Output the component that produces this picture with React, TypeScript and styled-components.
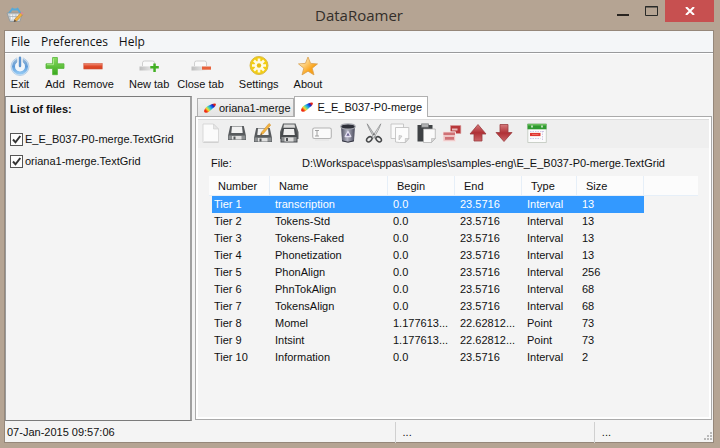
import React from "react";
import styled, { createGlobalStyle, css } from "styled-components";

const sans = `"Liberation Sans", Arial, sans-serif`;
const humanist = `"Open Sans", "Noto Sans", sans-serif`;

const GlobalStyle = createGlobalStyle`
  *, *::before, *::after { box-sizing: border-box; }
  body { margin: 0; background: #b5a493; font: 11px/16px ${sans}; color: #111; }
  button, input, table { font: inherit; color: inherit; }
`;

const Frame = styled.div`
  display: flex;
  flex-direction: column;
  min-height: 100vh;
  padding: 0 6px 5px 4px;
  background: #b5a493;
`;

const TitleBar = styled.header`
  display: grid;
  grid-template-columns: 1fr auto 1fr;
  height: 30px;
`;

const AppIcon = styled.svg`
  width: 18px;
  height: 18px;
  margin: 6px 0 0 2px;
`;

const Title = styled.h1`
  margin: 0;
  font: 400 15px/31px ${humanist};
  color: #332e2a;
`;

const WindowControls = styled.div`
  display: flex;
  justify-content: flex-end;
  align-items: flex-start;
`;

const WindowButton = styled.button<{ $danger?: boolean }>`
  display: grid;
  place-items: center;
  width: ${(p) => (p.$danger ? 49 : 28)}px;
  height: 22px;
  padding: 0;
  border: 0;
  background: ${(p) => (p.$danger ? "#c75050" : "transparent")};
`;

const Client = styled.div`
  display: flex;
  flex-direction: column;
  flex: 1;
  border: 1px solid #95877a;
  background: #f4f4f4;
`;

const MenuBar = styled.nav`
  display: flex;
  gap: 11px;
  height: 22px;
  padding-left: 6px;
  background: #f4f6f8;
  border-bottom: 1px solid #999a9c;
`;

const MenuItem = styled.button`
  padding: 0;
  border: 0;
  background: none;
  font: 12px/20px ${humanist};
`;

const MainToolbar = styled.div`
  display: flex;
  gap: 15px;
  height: 43px;
  padding: 2px 0 0 5px;
  border-top: 1px solid #fff;
`;

const ToolGroup = styled.div`
  display: flex;
  gap: 8px;
`;

const MainTool = styled.button`
  display: flex;
  flex-direction: column;
  align-items: center;
  padding: 0;
  border: 0;
  background: none;

  svg { width: 20px; height: 20px; }
`;

const Body = styled.div`
  display: flex;
  flex: 1;
  gap: 3px;
`;

const FilePanel = styled.aside`
  flex: 0 0 187px;
  padding: 4px 4px;
  border: 1px solid #7b7b7b;
  border-left-color: #999;
  border-right: 2px solid #a0a0a0;
`;

const PanelTitle = styled.h2`
  margin: 0 0 11px;
  font: 700 11px/16px ${sans};
`;

const FileRow = styled.label`
  display: flex;
  align-items: center;
  gap: 2px;
  height: 22px;
`;

const Tick = styled.span`
  display: grid;
  width: 13px;
  height: 13px;

  input, svg { grid-area: 1 / 1; margin: 0; width: 13px; height: 13px; }
  input { appearance: none; border: 1px solid #555; background: #fdfdfd; }
  svg { pointer-events: none; visibility: hidden; }
  input:checked + svg { visibility: visible; }
`;

const Notebook = styled.main`
  display: flex;
  flex-direction: column;
  flex: 1;
  min-width: 0;
  margin: 0 1px 1px 0;
`;

const Tabs = styled.div`
  display: flex;
  align-items: flex-end;
  height: 20px;
  padding-left: 2px;
`;

const Tab = styled.button<{ $active?: boolean }>`
  display: flex;
  align-items: center;
  gap: 2px;
  height: 18px;
  padding: 0 2px 0 5px;
  border: 1px solid #b0b0b0;
  border-bottom: 0;
  background: linear-gradient(#f1f1f1, #e4e4e4);

  svg { width: 14px; height: 12px; }

  ${(p) =>
    p.$active &&
    css`
      position: relative;
      gap: 4px;
      height: 21px;
      margin-bottom: -1px;
      padding: 0 5px;
      background: #fff;
    `}
`;

const Page = styled.section`
  flex: 1;
  border: 1px solid #aaa;
  box-shadow: inset 0 0 0 2px #fff;
  padding: 2px;
`;

const DocToolbar = styled.div`
  display: flex;
  gap: 7px;
  height: 29px;
  background: #efefef;
  border-top: 1px solid #dcdcdc;
`;

const DocGroup = styled.div`
  display: flex;
`;

const DocTool = styled.button`
  display: grid;
  place-items: center;
  width: 26px;
  height: 26px;
  padding: 0;
  border: 0;
  background: none;

  svg { width: 20px; height: 20px; }
`;

const FileLine = styled.dl`
  display: grid;
  grid-template-columns: 91px 1fr;
  margin: 7px 0 5px;
  padding-left: 13px;

  dd { margin: 0; white-space: nowrap; }
`;

const TierTable = styled.table`
  width: calc(100% - 22px);
  margin-left: 11px;
  table-layout: fixed;
  border-spacing: 0;
  text-align: left;
`;

const Col = styled.col<{ $w?: number }>`
  width: ${(p) => (p.$w ? `${p.$w}px` : "auto")};
`;

const HeadCell = styled.th`
  height: 20px;
  padding: 0 0 0 9px;
  font-weight: 400;
  background: #fcfcfc;
  border-right: 1px solid #e6eff8;
  border-bottom: 1px solid #e6eff8;

  &:last-child { border-right: 0; }
`;

const Cell = styled.td`
  height: 17px;
  padding: 0 3px 0 5px;
  line-height: 17px;
  overflow: hidden;
  white-space: nowrap;

  &:first-child {
    padding-left: 2px;
    border-left: 3px solid transparent;
    background-clip: padding-box;
  }
`;

const Row = styled.tr<{ $selected?: boolean }>`
  ${(p) =>
    p.$selected &&
    css`
      ${Cell}:not(:last-child) { background-color: #3399ff; color: #fff; }
    `}
`;

const StatusBar = styled.footer`
  display: grid;
  grid-template-columns: 389fr 199fr 119fr;
  height: 21px;
  padding-top: 1px;
`;

const StatusField = styled.div`
  display: flex;
  justify-content: space-between;
  padding-left: 2px;
  line-height: 21px;

  & + & { padding-left: 7px; border-left: 1px solid #d0d0d0; }
  svg { align-self: flex-end; width: 12px; height: 12px; }
`;

const BasketIcon = () => (
  <AppIcon viewBox="0 0 18 18" aria-hidden="true">
    <path d="M2.500 8 7 2M15 8 11 2M6.500 3.500h5" stroke="#57a9d8" strokeWidth="2" fill="none" />
    <path d="M1 7h15.500l-2.700 8.500H4z" fill="#ccd1d4" stroke="#8c979d" strokeWidth=".8" />
    <path d="M5 8.500l1 5M8 8.500v5M11.500 8.500l-.5 5" stroke="#f6f8f9" strokeWidth="1.300" />
    <path d="M3 10.500h11" stroke="#a9b2b8" strokeWidth=".8" />
    <path d="M8.500 13.500 14.500 7l2 1.800-6 6.400z" fill="#f2b13c" stroke="#b7792a" strokeWidth=".5" />
    <path d="m14.500 7 1-1.200 2 1.800-1 1.200z" fill="#d78a9a" />
    <path d="m8.500 13.500-.8 2.500 2.800-.8z" fill="#5d4630" />
  </AppIcon>
);

const PowerIcon = () => (
  <svg viewBox="0 0 20 20" aria-hidden="true">
    <defs>
      <linearGradient id="power" x2="0" y2="1">
        <stop stopColor="#8fb3d6" />
        <stop offset=".5" stopColor="#5f9bd8" />
        <stop offset="1" stopColor="#8fc6f2" />
      </linearGradient>
    </defs>
    <circle cx="10" cy="10.500" r="9" fill="#d3e5f6" stroke="#a9c6e2" strokeWidth=".8" />
    <circle cx="10" cy="10.500" r="6.500" fill="none" stroke="url(#power)" strokeWidth="3" />
    <circle cx="10" cy="10.500" r="4.800" fill="#f1f6fb" />
    <path d="M10 0v11" stroke="#f4f4f4" strokeWidth="5.500" />
    <path d="M10 1.800v8.200" stroke="#5b93cf" strokeWidth="2.400" strokeLinecap="round" />
  </svg>
);

const PlusIcon = () => (
  <svg viewBox="0 0 20 20" aria-hidden="true">
    <defs>
      <linearGradient id="plus" x2="0" y2="1">
        <stop stopColor="#8bdc62" />
        <stop offset="1" stopColor="#38a81c" />
      </linearGradient>
    </defs>
    <path d="M7.600 1.500h4.800v6.300H19v4.600h-6.600v6.300H7.600v-6.300H1V7.800h6.600z" fill="url(#plus)" stroke="#56b53a" strokeWidth=".8" />
    <path d="M8.500 2.500v6.200H2" stroke="#b7ef99" fill="none" strokeWidth=".8" />
  </svg>
);

const MinusIcon = () => (
  <svg viewBox="0 0 20 20" aria-hidden="true">
    <defs>
      <linearGradient id="minus" x2="0" y2="1">
        <stop stopColor="#f0907a" />
        <stop offset=".5" stopColor="#e04a2a" />
        <stop offset="1" stopColor="#d2401f" />
      </linearGradient>
    </defs>
    <rect x=".8" y="7.500" width="18.400" height="5.500" fill="url(#minus)" stroke="#d5553b" strokeWidth=".6" />
  </svg>
);

const TabShape = ({ id }: { id: string }) => (
  <>
    <defs>
      <linearGradient id={id}>
        <stop stopColor="#bdbdbd" />
        <stop offset="1" stopColor="#f7f7f7" />
      </linearGradient>
    </defs>
    <path d="M3.500 10V6.800q0-1.800 2-1.800h8q2 0 2 1.800V10" fill="#fafafa" stroke="#c4c4c4" strokeWidth=".8" />
    <path d="M.5 10.500h17v4H.5z" fill={`url(#${id})`} />
  </>
);

const NewTabIcon = () => (
  <svg viewBox="0 0 20 20" aria-hidden="true">
    <TabShape id="tabNew" />
    <path d="M14.300 7.500h2.500V10h3v2.500h-3v3.500h-2.500v-3.500h-3V10h3z" fill="#43b024" />
  </svg>
);

const CloseTabIcon = () => (
  <svg viewBox="0 0 20 20" aria-hidden="true">
    <TabShape id="tabClose" />
    <path d="M11 10.500h9v3.200h-9z" fill="#e8633c" />
  </svg>
);

const GearIcon = () => (
  <svg viewBox="0 0 20 20" aria-hidden="true">
    <defs>
      <radialGradient id="gear">
        <stop stopColor="#f4c81a" />
        <stop offset="1" stopColor="#f2cf10" />
      </radialGradient>
    </defs>
    <circle cx="10" cy="9.500" r="9" fill="url(#gear)" stroke="#d9b84a" />
    <path d="M10 2.500v14M3 9.500h14M5 4.500l10 10M15 4.500l-10 10" stroke="#fffbe4" strokeWidth="2.600" />
    <circle cx="10" cy="9.500" r="4.500" fill="#fffbe4" />
    <circle cx="10" cy="9.500" r="2.200" fill="#e9bd12" />
  </svg>
);

const StarIcon = () => (
  <svg viewBox="0 0 20 20" aria-hidden="true">
    <defs>
      <linearGradient id="star" x2="1" y2="1">
        <stop offset=".2" stopColor="#ffe9b5" />
        <stop offset=".65" stopColor="#fba51d" />
        <stop offset="1" stopColor="#f39a14" />
      </linearGradient>
    </defs>
    <path d="m10 1 2.600 6.400 6.900.5-5.300 4.300 1.800 6.700L10 15.200l-6 3.700 1.800-6.700L.5 7.900l6.900-.5z" fill="url(#star)" stroke="#d9a04b" strokeWidth=".8" />
  </svg>
);

const PlumeIcon = ({ id }: { id: string }) => (
  <svg viewBox="0 0 14 12" aria-hidden="true">
    <defs>
      <linearGradient id={id} gradientUnits="userSpaceOnUse" x1="11.500" y1="2" x2="3" y2="10">
        <stop offset=".05" stopColor="#e8200c" />
        <stop offset=".2" stopColor="#1a22c8" />
        <stop offset=".42" stopColor="#149af0" />
        <stop offset=".6" stopColor="#62dca0" />
        <stop offset=".75" stopColor="#f6d92e" />
        <stop offset=".95" stopColor="#ee2a12" />
      </linearGradient>
    </defs>
    <path d="M1 9Q2 5 6.500 3.200 11 .5 12.800 1.800 13.500 4 9.500 6.500 6 10.500 3 10.800 1 11 1 9z" fill={`url(#${id})`} />
  </svg>
);

const PageIcon = () => (
  <svg viewBox="0 0 20 20" aria-hidden="true">
    <path d="M2 1h10.500L17.500 6v13.500H2z" fill="#fbfbfb" stroke="#d2d2d2" strokeWidth=".8" />
    <path d="M12.500 1v5h5z" fill="#e6e6e6" stroke="#cfcfcf" strokeWidth=".6" />
    <path d="M3 19h14" stroke="#c9c9c9" />
  </svg>
);

const Floppy = () => (
  <>
    <path d="M3.200 3h13.600L19 13v4H1v-4z" fill="#575a5d" />
    <path d="M5 3.500h10l.7 6.500H4.300z" fill="#f2f2f2" />
    <path d="M1.500 12.500h17v4h-17z" fill="#8d9092" />
    <path d="M5 13h9.500v3.500H5z" fill="#dfdfdf" />
    <path d="M6.500 13.500h2v3h-2z" fill="#55585a" />
  </>
);

const SaveIcon = () => (
  <svg viewBox="0 0 20 20" aria-hidden="true"><Floppy /></svg>
);

const SaveAsIcon = () => (
  <svg viewBox="0 0 20 20" aria-hidden="true">
    <g transform="translate(0 2)"><Floppy /></g>
    <path d="m7.500 12 1-2.800 7.500-8.700 1.800 1.500-7.500 8.700z" fill="#f2b440" stroke="#cf8a2c" strokeWidth=".5" />
    <path d="m7.500 12 .6-1.700 1 .9z" fill="#413628" />
  </svg>
);

const SaveAllIcon = () => (
  <svg viewBox="0 0 20 20" aria-hidden="true">
    <path d="M4 .5h12.500l3 8.500v7H1V9z" fill="#5d6062" />
    <path d="M5 1.500h10.500l.8 4H4.200z" fill="#dadada" />
    <path d="M3.500 4.800h13L18.500 13v6.500h-17V13z" fill="#484b4e" />
    <path d="M5 6h10l.8 6H4.200z" fill="#f0f0f0" />
    <path d="M2.500 14h15v4.500h-15z" fill="#8b8e90" />
    <path d="M5.500 14.500h9v4h-9z" fill="#dedede" />
    <path d="M7 15h2v3H7z" fill="#505356" />
  </svg>
);

const RenameIcon = () => (
  <svg viewBox="0 0 20 20" aria-hidden="true">
    <rect x=".7" y="5" width="18.600" height="10.500" rx="1.800" fill="#fafafa" stroke="#b4b4b4" strokeWidth="1.100" />
    <path d="M3 7.500h4M5 7.500v5.500M3 13h4" stroke="#999" strokeWidth=".9" fill="none" />
    <path d="M3 17h14" stroke="#e2e2e2" />
  </svg>
);

const BinIcon = () => (
  <svg viewBox="0 0 20 20" aria-hidden="true">
    <defs>
      <linearGradient id="bin">
        <stop stopColor="#4c4d5e" />
        <stop offset=".45" stopColor="#b4b5c4" />
        <stop offset="1" stopColor="#494a5b" />
      </linearGradient>
    </defs>
    <path d="M3 3.500h14L16 18q-6 2.600-12 0z" fill="url(#bin)" />
    <ellipse cx="10" cy="3.500" rx="7.200" ry="2.600" fill="#2d2f38" stroke="#a5a7ae" strokeWidth="1.100" />
    <path d="m10 8.500 2.800 5H7.200z" fill="#6a6290" stroke="#e6e2f4" strokeWidth="1.300" strokeLinejoin="round" />
    <path d="M4 17.800q6 2.800 12 0" stroke="#32333f" fill="none" />
  </svg>
);

const ScissorsIcon = () => (
  <svg viewBox="0 0 20 20" aria-hidden="true">
    <path d="m3.200.8 9.300 14-1.600.8Q5 7 3.200.8z" fill="#c9cbcc" stroke="#77797b" strokeWidth=".6" />
    <path d="m16.800.8-9.300 14 1.600.8Q15 7 16.800.8z" fill="#e5e6e6" stroke="#77797b" strokeWidth=".6" />
    <ellipse cx="5.300" cy="16.300" rx="3" ry="2.100" transform="rotate(-40 5.300 16.300)" fill="none" stroke="#47494b" strokeWidth="1.500" />
    <ellipse cx="14.700" cy="16.300" rx="3" ry="2.100" transform="rotate(40 14.700 16.300)" fill="none" stroke="#47494b" strokeWidth="1.500" />
    <circle cx="10" cy="11.200" r=".8" fill="#555" />
  </svg>
);

const CopyIcon = () => (
  <svg viewBox="0 0 20 20" aria-hidden="true">
    <path d="M1 1h12.500v11l-3 3.500H1z" fill="#fafafa" stroke="#bdbdbd" strokeWidth=".8" />
    <path d="M5.500 4.500h13.300v11l-3.500 4H9.500L5.500 19z" fill="#fcfcfc" stroke="#bdbdbd" strokeWidth=".8" />
    <path d="M18.800 15.500h-3.500v4zM9 12.500v4.500l3-4z" fill="#dedede" stroke="#adadad" strokeWidth=".5" />
  </svg>
);

const PasteIcon = () => (
  <svg viewBox="0 0 20 20" aria-hidden="true">
    <path d="M1.500 2h15v16.500h-15z" fill="#3f4245" />
    <path d="M5.500.8h7v3.500h-7z" fill="#b2b4b5" stroke="#66696b" strokeWidth=".6" />
    <path d="M7.500 6h11.800v9.500l-3.800 4h-8z" fill="#fafafa" stroke="#a9a9a9" strokeWidth=".7" />
    <path d="M19.300 15.500h-3.800v4z" fill="#d7d7d7" stroke="#aaa" strokeWidth=".5" />
  </svg>
);

const DuplicateIcon = () => (
  <svg viewBox="0 0 20 20" aria-hidden="true">
    <path d="M8.500 2.500h10.300v8H8.500z" fill="#b8383b" stroke="#d59a9b" strokeWidth=".6" />
    <path d="M10 5.500h5.500v2H10z" fill="#e7bcbc" />
    <path d="M1 8.800h12.500v9.500H1z" fill="#eec4c4" stroke="#f7eaea" strokeWidth=".8" />
    <path d="M1.500 9.500h11.500v2.500H1.500zM3 14h9v2.800H3z" fill="#cf7175" />
  </svg>
);

const ArrowIcon = ({ down }: { down?: boolean }) => (
  <svg viewBox="0 0 20 20" aria-hidden="true">
    <defs>
      <linearGradient id={down ? "arrowDown" : "arrowUp"} x2="0" y2="1">
        <stop stopColor="#d67a7c" />
        <stop offset=".5" stopColor="#b03136" />
        <stop offset="1" stopColor="#cb6467" />
      </linearGradient>
    </defs>
    <path
      d={down ? "M6 1.500h8v8h4L10 18.500 2 9.500h4z" : "m10 1.500 8 9.500h-4v7H6v-7H2z"}
      fill={`url(#${down ? "arrowDown" : "arrowUp"})`}
      stroke="#9b3d40"
      strokeWidth=".8"
      strokeLinejoin="round"
    />
  </svg>
);

const CalendarIcon = () => (
  <svg viewBox="0 0 20 20" aria-hidden="true">
    <path d="M.8 1h18.500v18.500H.8z" fill="#fcfcfc" stroke="#bfc6bd" strokeWidth=".8" />
    <path d="M.5.8h19v5.500H.5z" fill="#2f9a30" />
    <path d="M1 1h18v1.500H1z" fill="#66bd5a" />
    <path d="M5 2.500v2M15 2.500v2" stroke="#e6f6df" strokeWidth="1.500" />
    <path d="M3 11.500h10.500" stroke="#e0352f" strokeWidth="3.200" />
    <path d="M5 11.500h6.500" stroke="#ee7a75" strokeWidth=".8" />
    <path d="M3 8.500h14M3 15.500h10.500M15.500 8v9" stroke="#c5b9df" strokeWidth=".8" strokeDasharray="1.500 1" />
  </svg>
);

const TickIcon = () => (
  <svg viewBox="0 0 13 13" aria-hidden="true">
    <path d="M3 6.500 5.500 9.300 10.300 3" fill="none" stroke="#333" strokeWidth="2" />
  </svg>
);

const GripIcon = () => (
  <svg viewBox="0 0 12 12" aria-hidden="true">
    <path d="M9 1h2v2H9zM6 4h2v2H6zM9 4h2v2H9zM3 7h2v2H3zM6 7h2v2H6zM9 7h2v2H9z" fill="#b9b9b9" />
  </svg>
);

const mainTools = [
  [{ label: "Exit", Icon: PowerIcon }],
  [{ label: "Add", Icon: PlusIcon }, { label: "Remove", Icon: MinusIcon }],
  [{ label: "New tab", Icon: NewTabIcon }, { label: "Close tab", Icon: CloseTabIcon }],
  [{ label: "Settings", Icon: GearIcon }],
  [{ label: "About", Icon: StarIcon }],
];

const docTools: { label: string; icon: React.ReactNode }[][] = [
  [
    { label: "New", icon: <PageIcon /> },
    { label: "Save", icon: <SaveIcon /> },
    { label: "Save as", icon: <SaveAsIcon /> },
    { label: "Save all", icon: <SaveAllIcon /> },
  ],
  [
    { label: "Rename", icon: <RenameIcon /> },
    { label: "Delete", icon: <BinIcon /> },
    { label: "Cut", icon: <ScissorsIcon /> },
    { label: "Copy", icon: <CopyIcon /> },
    { label: "Paste", icon: <PasteIcon /> },
    { label: "Duplicate", icon: <DuplicateIcon /> },
    { label: "Move up", icon: <ArrowIcon /> },
    { label: "Move down", icon: <ArrowIcon down /> },
  ],
  [{ label: "View", icon: <CalendarIcon /> }],
];

const files = ["E_E_B037-P0-merge.TextGrid", "oriana1-merge.TextGrid"];
const headings = ["Number", "Name", "Begin", "End", "Type", "Size", ""];
const columnWidths = [61, 118, 67, 67, 55, 67, undefined];

const tiers = [
  ["Tier 1", "transcription", "0.0", "23.5716", "Interval", "13"],
  ["Tier 2", "Tokens-Std", "0.0", "23.5716", "Interval", "13"],
  ["Tier 3", "Tokens-Faked", "0.0", "23.5716", "Interval", "13"],
  ["Tier 4", "Phonetization", "0.0", "23.5716", "Interval", "13"],
  ["Tier 5", "PhonAlign", "0.0", "23.5716", "Interval", "256"],
  ["Tier 6", "PhnTokAlign", "0.0", "23.5716", "Interval", "68"],
  ["Tier 7", "TokensAlign", "0.0", "23.5716", "Interval", "68"],
  ["Tier 8", "Momel", "1.177613...", "22.62812...", "Point", "73"],
  ["Tier 9", "Intsint", "1.177613...", "22.62812...", "Point", "73"],
  ["Tier 10", "Information", "0.0", "23.5716", "Interval", "2"],
];

export default function App() {
  return (
    <>
      <GlobalStyle />
      <Frame>
        <TitleBar>
          <BasketIcon />
          <Title>DataRoamer</Title>
          <WindowControls>
            <WindowButton aria-label="Minimize">
              <svg width="12" height="10" viewBox="0 0 12 10"><path d="M0 8h12v2H0z" fill="#292420" /></svg>
            </WindowButton>
            <WindowButton aria-label="Maximize">
              <svg width="13" height="10" viewBox="0 0 13 10"><path d="M.5.5h12v9H.5zM0 1h13" fill="none" stroke="#292a28" /></svg>
            </WindowButton>
            <WindowButton $danger aria-label="Close">
              <svg width="10" height="8" viewBox="0 0 10 8"><path d="m1 0 8 8M9 0 1 8" stroke="#fff" strokeWidth="2" /></svg>
            </WindowButton>
          </WindowControls>
        </TitleBar>
        <Client>
          <MenuBar>
            {["File", "Preferences", "Help"].map((m) => <MenuItem key={m}>{m}</MenuItem>)}
          </MenuBar>
          <MainToolbar>
            {mainTools.map((group) => (
              <ToolGroup key={group[0].label}>
                {group.map(({ label, Icon }) => (
                  <MainTool key={label}><Icon />{label}</MainTool>
                ))}
              </ToolGroup>
            ))}
          </MainToolbar>
          <Body>
            <FilePanel>
              <PanelTitle>List of files:</PanelTitle>
              {files.map((name) => (
                <FileRow key={name}>
                  <Tick><input type="checkbox" defaultChecked /><TickIcon /></Tick>
                  {name}
                </FileRow>
              ))}
            </FilePanel>
            <Notebook>
              <Tabs role="tablist">
                <Tab role="tab" aria-selected={false}><PlumeIcon id="plumeA" />oriana1-merge</Tab>
                <Tab role="tab" aria-selected $active><PlumeIcon id="plumeB" />E_E_B037-P0-merge</Tab>
              </Tabs>
              <Page>
                <DocToolbar>
                  {docTools.map((group) => (
                    <DocGroup key={group[0].label}>
                      {group.map(({ label, icon }) => (
                        <DocTool key={label} aria-label={label}>{icon}</DocTool>
                      ))}
                    </DocGroup>
                  ))}
                </DocToolbar>
                <FileLine>
                  <dt>File:</dt>
                  <dd>D:\Workspace\sppas\samples\samples-eng\E_E_B037-P0-merge.TextGrid</dd>
                </FileLine>
                <TierTable>
                  <colgroup>{columnWidths.map((w, i) => <Col key={i} $w={w} />)}</colgroup>
                  <thead>
                    <tr>{headings.map((h) => <HeadCell key={h} scope="col">{h}</HeadCell>)}</tr>
                  </thead>
                  <tbody>
                    {tiers.map((tier, i) => (
                      <Row key={tier[0]} $selected={i === 0}>
                        {tier.map((value, c) => <Cell key={c}>{value}</Cell>)}
                        <Cell />
                      </Row>
                    ))}
                  </tbody>
                </TierTable>
              </Page>
            </Notebook>
          </Body>
          <StatusBar>
            <StatusField>07-Jan-2015 09:57:06</StatusField>
            <StatusField>...</StatusField>
            <StatusField>...<GripIcon /></StatusField>
          </StatusBar>
        </Client>
      </Frame>
    </>
  );
}
